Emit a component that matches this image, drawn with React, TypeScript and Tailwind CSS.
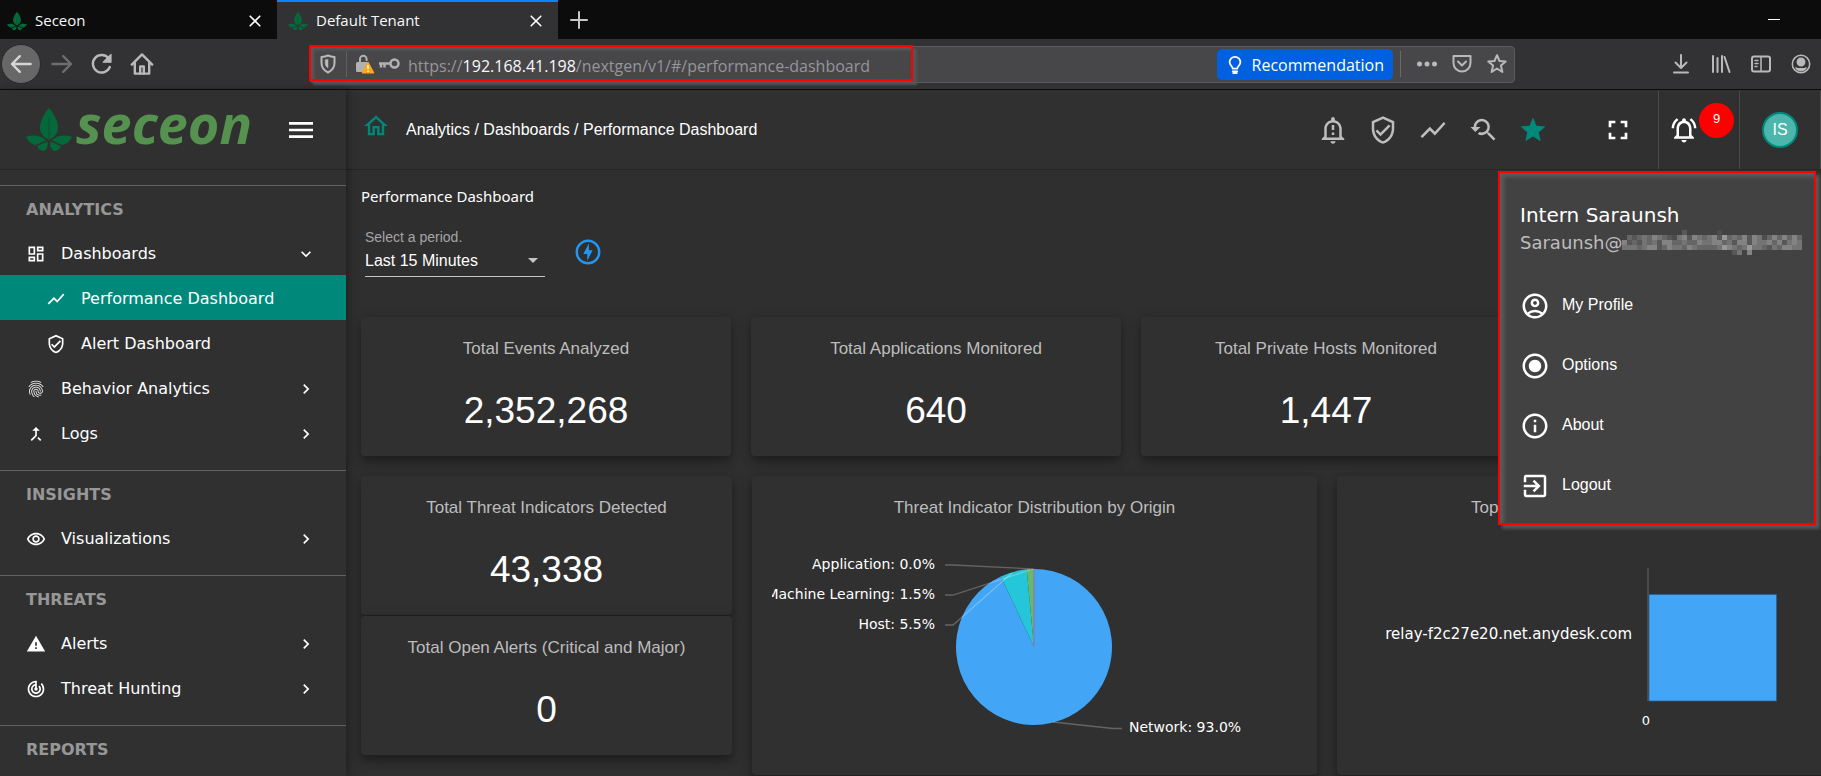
import React from "react";
import {
  MdOutlineDashboard, MdShowChart, MdOutlineVerifiedUser, MdFingerprint, MdCallMerge, MdOutlineRemoveRedEye,
  MdWarning, MdTrackChanges, MdChevronRight, MdExpandMore, MdMenu, MdOutlineHome, MdOutlineNotificationImportant,
  MdYoutubeSearchedFor, MdStar, MdFullscreen, MdOutlineNotificationsActive, MdOutlineAccountCircle,
  MdRadioButtonChecked, MdOutlineInfo, MdExitToApp, MdOutlineOfflineBolt, MdArrowDropDown,
} from "react-icons/md";

type IconType = React.ComponentType<{ className?: string }>;

const ARIAL = "font-['Liberation_Sans',sans-serif]";
const VERDANA = "font-['DejaVu_Sans',sans-serif]";
const SEGOE = "font-['Open_Sans',sans-serif]";

function Leaf({ className }: { className: string }) {
  return (
    <svg viewBox="0 0 46 43" className={className} aria-hidden="true">
      <g fill="#04693a">
        <path d="M23 0C17 7 14 14 14 20c0 6 4 9 9 12 5-3 9-6 9-12 0-6-3-13-9-20z" />
        <path d="M0 29c7-2.500 15-2 20 3.500L9.500 37C5 36 2 33 0 29z" />
        <path d="M46 29c-7-2.500-15-2-20 3.500L36.500 37c4.500-1 7.500-4 9.500-8z" />
        <path d="M11 38l10.500-4.500c1 4-.5 8.500-4 9.500-3 0-5-2-6.500-5z" />
        <path d="M35 38l-10.500-4.500c-1 4 .5 8.500 4 9.500 3 0 5-2 6.500-5z" />
      </g>
      <path d="M23 10v22" stroke="#2f2f2f" strokeWidth="0.600" />
    </svg>
  );
}

function Stroke({ className, children, w = 2 }: { className: string; children: React.ReactNode; w?: number }) {
  return (
    <svg viewBox="0 0 20 20" className={className} fill="none" stroke="currentColor" strokeWidth={w} strokeLinecap="round" strokeLinejoin="round" aria-hidden="true">
      {children}
    </svg>
  );
}

function Tab({ title, active }: { title: string; active?: boolean }) {
  return (
    <div className={`flex h-full items-center border-t-2 pr-[14px] ${active ? "w-[281px] border-[#0a84ff] bg-[#323234] pl-[11px]" : "w-[277px] border-transparent pl-[7px]"}`}>
      <Leaf className="h-5 w-5" />
      <span className="flex-1 pl-2 text-[15px] text-[#f9f9fa]">{title}</span>
      <button aria-label={`Close ${title}`} className="text-white">
        <Stroke className="h-4 w-4"><path d="M4 4l12 12M16 4L4 16" /></Stroke>
      </button>
    </div>
  );
}

function BrowserChrome() {
  return (
    <div className={SEGOE}>
      <div className="flex h-[39px] items-center bg-[#0c0c0d]">
        <Tab title="Seceon" />
        <Tab title="Default Tenant" active />
        <button aria-label="New tab" className="ml-[11px] text-[#c8c8c9]">
          <Stroke className="h-5 w-5"><path d="M10 2v16M2 10h16" /></Stroke>
        </button>
        <button aria-label="Minimize" className="mr-[41px] ml-auto flex h-4 w-3 items-center"><span className="h-px w-3 bg-white" /></button>
      </div>
      <div className="flex h-[51px] items-center border-b border-[#0c0c0d] bg-[#323234] text-[#b9b9ba]">
        <div className="flex w-[309px] items-center pl-px">
          <button aria-label="Back" className="flex h-10 w-10 items-center justify-center rounded-full border border-[#29292b] bg-[#676768] text-[#d6d6d7]">
            <Stroke className="h-6 w-6"><path d="M18 10H2.500M9 3.500L2.500 10 9 16.500" /></Stroke>
          </button>
          <button aria-label="Forward" className="ml-[9px] text-[#6d6d6e]">
            <Stroke className="h-6 w-6"><path d="M2 10h15.500M11 3.500l6.500 6.500-6.500 6.500" /></Stroke>
          </button>
          <button aria-label="Reload" className="ml-4">
            <Stroke className="h-6 w-6"><path d="M16.500 12.500A7.300 7.300 0 1 1 15.500 5.300" /><path d="M17.500 2v6.500H11z" fill="currentColor" strokeWidth="1" /></Stroke>
          </button>
          <button aria-label="Home" className="ml-4">
            <Stroke className="h-6 w-6"><path d="M1.500 10.500L10 2l8.500 8.500M4 9v9h12V9" /><path d="M8.500 18v-6h3v6" /></Stroke>
          </button>
        </div>
        <div className="relative flex h-[37px] flex-1 items-center rounded-sm border border-[#5c5c5e] bg-[#474749]">
          <div aria-hidden="true" className="pointer-events-none absolute -top-[2px] -left-px h-9 w-[604px] border-2 border-[#fe0000] shadow-[4px_4px_2px_#555557,inset_3px_3px_3px_#59595b]" />
          <Stroke className="ml-2 h-5 w-5"><path d="M10 1.500c2.500 1 4.500 1.300 6.500 1.500v6c0 4.500-2.500 7.500-6.500 9.500-4-2-6.500-5-6.500-9.500V3c2-.2 4-.5 6.500-1.500z" /><path d="M10 5.500v8.500c-2-1.300-2.800-3-2.800-5V6z" fill="currentColor" strokeWidth="0.500" /></Stroke>
          <span className="ml-2 h-[26px] w-px bg-[#5f5f61]" />
          <svg viewBox="0 0 20 20" className="ml-2 h-5 w-5" aria-hidden="true">
            <path d="M5 9V5a3.300 3.300 0 0 1 6.600 0v2" fill="none" stroke="#b1b1b2" strokeWidth="2" />
            <rect x="1" y="8" width="12" height="10" rx="1.500" fill="#b1b1b2" />
            <path d="M13 8l6 11H7z" fill="#ffa713" stroke="#ffa713" strokeLinejoin="round" />
            <path d="M13 11v4M13 16.500v1.500" stroke="#fff" strokeWidth="1.500" />
          </svg>
          <svg viewBox="0 0 22 20" className="ml-[3px] h-5 w-[22px]" fill="none" stroke="#b1b1b2" aria-hidden="true">
            <circle cx="16.500" cy="9.500" r="4" strokeWidth="2.500" /><path d="M1 9.500h11M3 9.500v4M6.500 9.500v4" strokeWidth="2.500" />
          </svg>
          <div role="textbox" aria-label="Address" tabIndex={0} className="ml-2 flex-1 pt-[3px] text-[16px] whitespace-nowrap text-[#96969a]">
            https://<span className="text-[#f9f9fa]">192.168.41.198</span>/nextgen/v1/#/performance-dashboard
          </div>
          <button className="flex h-[31px] items-center gap-2 rounded-[5px] bg-[#0060df] px-[9px] pt-px text-[16px] text-white">
            <Stroke className="h-5 w-[18px]"><path d="M7.500 14c0-2.500-3.500-3.500-3.500-7a6 6 0 0 1 12 0c0 3.500-3.500 4.500-3.500 7zM7.500 17h5M8 19h4" /></Stroke>
            Recommendation
          </button>
          <span className="ml-[7px] h-[26px] w-px bg-[#6a6a6c]" />
          <button aria-label="Page actions" className="ml-4">
            <svg viewBox="0 0 20 6" className="h-[6px] w-5" fill="currentColor" aria-hidden="true"><circle cx="2.500" cy="3" r="2.500" /><circle cx="10" cy="3" r="2.500" /><circle cx="17.500" cy="3" r="2.500" /></svg>
          </button>
          <button aria-label="Save to Pocket" className="ml-[15px]">
            <Stroke className="h-5 w-5"><path d="M1.500 2h17v7a8.500 8.500 0 0 1-17 0z" /><path d="M6 7.500l4 4 4-4" /></Stroke>
          </button>
          <button aria-label="Bookmark" className="mr-[7px] ml-[15px]">
            <Stroke className="h-5 w-5"><path d="M10 1.200l2.500 5.800 6.200.5-4.800 4 1.500 6.500-5.400-3.500L4.600 18l1.500-6.500-4.800-4 6.200-.5z" /></Stroke>
          </button>
        </div>
        <div className="flex w-[306px] items-center justify-end gap-5 pr-[10px]">
          <button aria-label="Downloads"><Stroke className="h-5 w-5"><path d="M10 1v12M4.500 8.500L10 14l5.500-5.500M3 18.500h14" /></Stroke></button>
          <button aria-label="Library"><Stroke className="h-5 w-5"><path d="M2 2v16M6.500 4v14M11 2v16M13.500 3l5 15" /></Stroke></button>
          <button aria-label="Sidebars"><Stroke className="h-5 w-5"><rect x="1" y="2.500" width="18" height="15" rx="2" /><path d="M10 3v14M4 6.500h3M4 9.500h3M4 12.500h2" strokeWidth="1.500" /></Stroke></button>
          <button aria-label="Account"><Stroke className="h-5 w-5" w={1.5}><circle cx="10" cy="10" r="8.700" /><circle cx="10" cy="8" r="3.700" fill="currentColor" /><path d="M5 14c1 1 9 1 10 0-2 3.500-8 3.500-10 0z" fill="currentColor" /></Stroke></button>
        </div>
      </div>
    </div>
  );
}

function NavItem({ icon: Icon, label, child, active, open }: { icon: IconType; label: string; child?: boolean; active?: boolean; open?: boolean }) {
  const Arrow = open ? MdExpandMore : MdChevronRight;
  return (
    <li>
      <a href="#" className={`flex h-[45px] items-center gap-[15px] pt-[2px] pr-[30px] text-[16px] text-white ${active ? "bg-[#00897b]" : ""} ${child ? "pl-[46px]" : "pl-[26px]"}`}>
        <Icon className="h-5 w-5" />
        <span className="flex-1">{label}</span>
        {!child && <Arrow className="h-5 w-5" />}
      </a>
    </li>
  );
}

function NavSection({ title, children }: { title: string; children?: React.ReactNode }) {
  return (
    <section className="border-t border-[#616161] pb-[15px]">
      <h2 className="flex h-11 items-center pt-[3px] pl-[26px] text-[16px] font-bold text-[#979797]">{title}</h2>
      <ul>{children}</ul>
    </section>
  );
}

function Sidebar() {
  return (
    <aside className={`z-10 w-[346px] shrink-0 overflow-hidden bg-[#303030] shadow-[2px_0_8px_rgba(0,0,0,0.350)] ${VERDANA}`}>
      <div className="flex h-20 items-center border-b border-[#262626] pr-[29px] pl-[26px]">
        <Leaf className="h-[43px] w-[46px]" />
        <span className="flex-1 pb-[14px] pl-1 font-['Open_Sans',sans-serif] text-[54px] leading-[66px] font-bold text-[#55924f] italic">seceon</span>
        <button aria-label="Toggle menu" className="text-white"><MdMenu className="h-8 w-8" /></button>
      </div>
      <nav className="pt-[15px]">
        <NavSection title="ANALYTICS">
          <NavItem icon={MdOutlineDashboard} label="Dashboards" open />
          <NavItem icon={MdShowChart} label="Performance Dashboard" child active />
          <NavItem icon={MdOutlineVerifiedUser} label="Alert Dashboard" child />
          <NavItem icon={MdFingerprint} label="Behavior Analytics" />
          <NavItem icon={MdCallMerge} label="Logs" />
        </NavSection>
        <NavSection title="INSIGHTS">
          <NavItem icon={MdOutlineRemoveRedEye} label="Visualizations" />
        </NavSection>
        <NavSection title="THREATS">
          <NavItem icon={MdWarning} label="Alerts" />
          <NavItem icon={MdTrackChanges} label="Threat Hunting" />
        </NavSection>
        <NavSection title="REPORTS" />
      </nav>
    </aside>
  );
}

function AppHeader() {
  const tools: [string, IconType, string][] = [
    ["Notices", MdOutlineNotificationImportant, "text-[#bdbdbd]"],
    ["Alert dashboard", MdOutlineVerifiedUser, "text-[#bdbdbd]"],
    ["Performance", MdShowChart, "text-[#bdbdbd]"],
    ["Search history", MdYoutubeSearchedFor, "text-[#bdbdbd]"],
    ["Favourites", MdStar, "text-[#00897b]"],
  ];
  return (
    <header className={`flex h-20 items-center border-b border-[#262626] bg-[#303030] pt-px pl-4 text-white shadow-[0_1px_2px_rgba(0,0,0,0.250)] ${ARIAL}`}>
      <a href="#" aria-label="Home" className="pb-2 text-[#00897b]"><MdOutlineHome className="h-7 w-7" /></a>
      <p className="flex-1 pl-4 text-[16px]">Analytics / Dashboards / Performance Dashboard</p>
      <div className="flex gap-5 pr-[54px]">
        {tools.map(([label, Icon, color]) => (
          <button key={label} aria-label={label} className={color}><Icon className="h-[30px] w-[30px]" /></button>
        ))}
      </div>
      <button aria-label="Full screen" className="mr-6"><MdFullscreen className="h-8 w-8" /></button>
      <div className="relative flex h-full w-[81px] items-center border-l border-[#4a4a4a] pl-[10px]">
        <button aria-label="Notifications"><MdOutlineNotificationsActive className="h-[30px] w-[30px]" /></button>
        <span className="absolute top-3 left-10 flex h-[35px] w-[35px] items-center justify-center rounded-full bg-[#fe0000] pb-1 text-[13px]">9</span>
      </div>
      <div className="flex h-full w-[82px] items-center justify-center border-x border-[#4a4a4a]">
        <button className="h-9 w-9 rounded-full border-2 border-[#00897b] bg-[#4db6ac] text-[16px]">IS</button>
      </div>
    </header>
  );
}

const CARD = "rounded-[4px] bg-[#303030] shadow-[0_6px_8px_rgba(0,0,0,0.280),0_2px_14px_rgba(0,0,0,0.140)]";

function CardTitle({ children, left }: { children: React.ReactNode; left?: boolean }) {
  return <h3 className={`text-[17px] leading-6 text-[#bdbdbd] ${left ? "pl-[134px]" : "text-center"}`}>{children}</h3>;
}

function Stat({ title, value }: { title: string; value: string }) {
  return (
    <article className={`h-[139px] pt-5 ${CARD}`}>
      {title && <CardTitle>{title}</CardTitle>}
      <p className="pt-7 text-center text-[37px] leading-[44px] text-white">{value}</p>
    </article>
  );
}

const R = 78, CX = 262, CY = 107;
const point = (f: number) => `${CX + R * Math.sin(f * 2 * Math.PI)} ${CY - R * Math.cos(f * 2 * Math.PI)}`;
const slice = (a: number, b: number) => `M${CX} ${CY}L${point(a)}A${R} ${R} 0 ${b - a > 0.5 ? 1 : 0} 1 ${point(b)}Z`;

function PieChart() {
  return (
    <svg width="525" height="200" className="mx-auto mt-5 overflow-hidden" role="img" aria-label="Threat indicators by origin">
      <path d={slice(0, 0.93)} fill="#42a5f5" />
      <path d={slice(0.93, 0.985)} fill="#26c6da" />
      <path d={slice(0.985, 1)} fill="#66bb6a" />
      <path d={`M${CX} ${CY}V${CY - R}`} stroke="#8a7cb4" strokeWidth="1.500" />
      <g fill="none" stroke="#fff" strokeOpacity="0.250" strokeWidth="1.300">
        <path d="M173 25h8L262 29" />
        <path d="M173 55h8L258 30" />
        <path d="M173 85h8L240 33" />
        <path d="M281 182L341 188.500h9" />
      </g>
      <g fill="#fff" fontSize="14">
        <text x="163" y="29" textAnchor="end">Application: 0.0%</text>
        <text x="163" y="59" textAnchor="end">Machine Learning: 1.5%</text>
        <text x="163" y="89" textAnchor="end">Host: 5.5%</text>
        <text x="357" y="192">Network: 93.0%</text>
      </g>
    </svg>
  );
}

function BarChart() {
  return (
    <svg width="525" height="200" className="mx-auto mt-5" role="img" aria-label="Top hosts">
      <path d="M291 28v133" stroke="#4a4a4a" strokeWidth="2" />
      <rect x="292" y="54.500" width="127.500" height="106.500" fill="#42a5f5" stroke="#2b5f8c" strokeWidth="0.700" />
      <g fill="#fff">
        <text x="275" y="99" textAnchor="end" fontSize="15">relay-f2c27e20.net.anydesk.com</text>
        <text x="289" y="185" textAnchor="middle" fontSize="13">0</text>
      </g>
    </svg>
  );
}

function Dashboard() {
  return (
    <main className={`flex-1 bg-[#2f2f2f] px-[15px] pt-4 text-white ${ARIAL}`}>
      <h1 className="font-['Noto_Sans',sans-serif] text-[15px] leading-5">Performance Dashboard</h1>
      <div className="flex items-center gap-7 pt-[23px] pl-1">
        <div className="relative w-[180px] border-b border-[#c4c4c4]">
          <label htmlFor="period" className="block text-[14px] leading-4 text-[#a5a5a5]">Select a period.</label>
          <select id="period" className="block h-[31px] w-full appearance-none bg-transparent text-[16px] text-white outline-none">
            <option>Last 15 Minutes</option>
          </select>
          <MdArrowDropDown className="pointer-events-none absolute right-0 bottom-1 h-6 w-6 text-[#c4c4c4]" />
        </div>
        <button aria-label="Refresh" className="pb-[2px] text-[#2196f3]"><MdOutlineOfflineBolt className="h-[30px] w-[30px]" /></button>
      </div>
      <div className="mr-[-95px] grid grid-cols-4 gap-5 pt-10">
        <Stat title="Total Events Analyzed" value="2,352,268" />
        <Stat title="Total Applications Monitored" value="640" />
        <Stat title="Total Private Hosts Monitored" value="1,447" />
        <Stat title="" value="" />
      </div>
      <div className={`mt-5 mr-[-96px] grid grid-cols-[371fr_565fr_565fr] gap-5 ${VERDANA}`}>
        <div className={`flex flex-col gap-px ${ARIAL}`}>
          <Stat title="Total Threat Indicators Detected" value="43,338" />
          <Stat title="Total Open Alerts (Critical and Major)" value="0" />
        </div>
        <article className={`h-[299px] pt-5 ${CARD}`}>
          <div className={ARIAL}><CardTitle>Threat Indicator Distribution by Origin</CardTitle></div>
          <PieChart />
        </article>
        <article className={`h-[299px] pt-5 ${CARD}`}>
          <div className={ARIAL}><CardTitle left>Top</CardTitle></div>
          <BarChart />
        </article>
      </div>
    </main>
  );
}

/* Each digit is the brightness of one 5px cell; 0 leaves the cell empty. */
const MOSAIC = [
  "000000000000200000010000000000000000",
  "032343543214525434526343525413535353",
  "523243425533433544553425525445352454",
  "444345523544354333346543464432435544",
  "000000000000000000000024050000000000",
];
const SHADES = ["", "#4d4d4d", "#575757", "#666666", "#747474", "#838383", "#989898"];

function Mosaic() {
  return (
    <svg width="180" height="25" shapeRendering="crispEdges" className="shrink-0" aria-label="Hidden mail domain" role="img">
      {MOSAIC.flatMap((row, y) =>
        row.split("").map((d, x) => (d === "0" ? null : <rect key={`${x}-${y}`} x={x * 5} y={y * 5} width="5" height="5" fill={SHADES[Number(d)]} />)),
      )}
    </svg>
  );
}

function UserMenu() {
  const items: [string, IconType][] = [
    ["My Profile", MdOutlineAccountCircle],
    ["Options", MdRadioButtonChecked],
    ["About", MdOutlineInfo],
    ["Logout", MdExitToApp],
  ];
  return (
    <div className={`absolute top-[81px] right-[5px] z-20 h-[354px] w-[318px] border-2 border-[#fe0000] bg-[#424242] pt-[30px] pl-5 text-white shadow-[4px_4px_3px_#555,inset_4px_4px_4px_#5c5c5c] ${ARIAL}`}>
      <div className={VERDANA}>
        <p className="text-[20px] leading-6">Intern Saraunsh</p>
        <p className="flex h-[30px] items-center text-[18px] text-[#bdbdbd]"><span className="w-[102px]">Saraunsh@</span><Mosaic /></p>
      </div>
      <ul className="pt-[19px]">
        {items.map(([label, Icon]) => (
          <li key={label}>
            <button className="flex h-[60px] w-full items-center gap-3 text-[16px]">
              <Icon className="h-[30px] w-[30px]" />
              <span className="pb-[2px]">{label}</span>
            </button>
          </li>
        ))}
      </ul>
    </div>
  );
}

export default function App() {
  return (
    <div className="flex h-screen flex-col overflow-hidden bg-[#303030]">
      <BrowserChrome />
      <div className="relative flex min-h-0 flex-1">
        <Sidebar />
        <div className="flex min-w-0 flex-1 flex-col overflow-hidden">
          <AppHeader />
          <Dashboard />
        </div>
        <UserMenu />
      </div>
    </div>
  );
}
